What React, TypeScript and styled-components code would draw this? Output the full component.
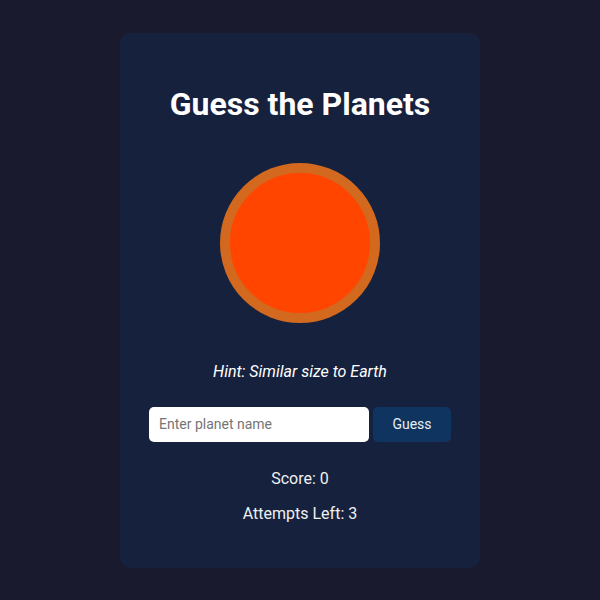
import React, { useState } from "react";
import styled, { createGlobalStyle } from "styled-components";

const Global = createGlobalStyle`
  html, body { margin: 0; padding: 0; }
  body {
    background: #1a1a2e;
    font-family: Roboto, "Liberation Sans", sans-serif;
    color: #ffffff;
  }
`;

const Page = styled.div`
  min-height: 100vh;
  display: flex;
  align-items: center;
  justify-content: center;
`;

const Card = styled.div`
  width: 360px;
  box-sizing: border-box;
  background: #16213e;
  border-radius: 10px;
  padding: 52px 0 45px;
  display: flex;
  flex-direction: column;
  align-items: center;
`;

const Title = styled.h1`
  margin: 0;
  font-size: 32px;
  font-weight: 700;
  line-height: 38px;
  color: #ffffff;
`;

const Planet = styled.div<{ $color: string; $ring: string }>`
  width: 160px;
  height: 160px;
  box-sizing: border-box;
  border-radius: 50%;
  background: ${(p) => p.$color};
  border: 10px solid ${(p) => p.$ring};
  margin-top: 40px;
`;

const Hint = styled.p`
  margin: 39px 0 0;
  font-size: 16px;
  line-height: 19px;
  font-style: italic;
  color: #ffffff;
`;

const Row = styled.form`
  display: flex;
  gap: 4px;
  margin-top: 26px;
`;

const Input = styled.input`
  width: 220px;
  height: 35px;
  box-sizing: border-box;
  border: none;
  border-radius: 5px;
  padding: 0 10px;
  font-family: Roboto, "Liberation Sans", sans-serif;
  font-size: 14px;
  color: #222;
  background: #ffffff;
  outline: none;
  &::placeholder { color: #757575; }
`;

const Button = styled.button`
  width: 78px;
  height: 35px;
  border: none;
  border-radius: 5px;
  background: #0f3460;
  color: #e8eef5;
  font-family: Roboto, "Liberation Sans", sans-serif;
  font-size: 14px;
  cursor: pointer;
`;

const Stat = styled.p<{ $top: number }>`
  margin: ${(p) => p.$top}px 0 0;
  font-size: 16px;
  line-height: 19px;
  color: #f0f0f0;
`;

export default function App() {
  const [value, setValue] = useState("");
  return (
    <>
      <Global />
      <Page>
        <Card>
          <Title>Guess the Planets</Title>
          <Planet $color="#ff4500" $ring="#d2691e" />
          <Hint>Hint: Similar size to Earth</Hint>
          <Row onSubmit={(e) => e.preventDefault()}>
            <Input
              placeholder="Enter planet name"
              value={value}
              onChange={(e) => setValue(e.target.value)}
            />
            <Button type="submit">Guess</Button>
          </Row>
          <Stat $top={27}>Score: 0</Stat>
          <Stat $top={16}>Attempts Left: 3</Stat>
        </Card>
      </Page>
    </>
  );
}
